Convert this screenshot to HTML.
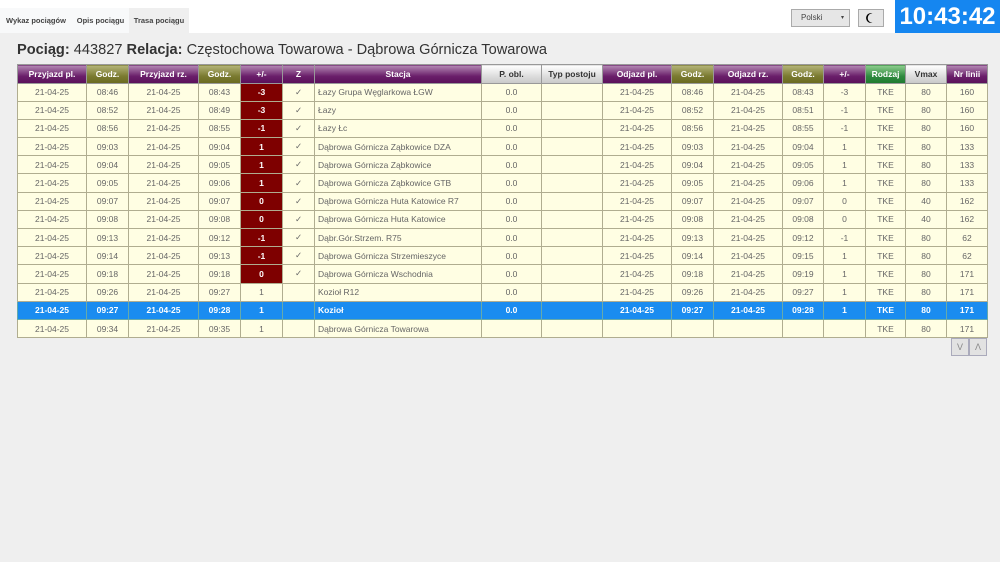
<!DOCTYPE html>
<html><head><meta charset="utf-8"><style>
*{box-sizing:border-box;margin:0;padding:0}
body{width:1000px;height:562px;background:#efefef;font-family:"Liberation Sans",sans-serif;overflow:hidden;position:relative}
.top{position:absolute;left:0;top:0;width:1000px;height:33px;background:#fff}
.tab{position:absolute;top:8px;height:25px;font-size:7.5px;font-weight:bold;color:#444;line-height:25px;text-align:center;background:#f8f9fa}
.sel{position:absolute;left:791px;top:9px;width:59px;height:18px;border:1px solid #aaa;background:#e6e6e6;font-size:8px;color:#444;line-height:16px;padding-left:9px}
.sel span{position:absolute;right:5px;top:0;font-size:6px}
.moon{position:absolute;left:858px;top:9px;width:26px;height:18px;border:1px solid #aaa;background:#e6e6e6}
.clock{position:absolute;left:895px;top:0;width:105px;height:33px;background:#1586f0;color:#fff;font-weight:bold;font-size:24px;line-height:33px;text-align:center}
h1{position:absolute;left:17px;top:42px;font-size:14.6px;font-weight:normal;color:#333;white-space:nowrap}
h1 b{font-weight:bold}
table{position:absolute;left:17px;top:64px;border-collapse:collapse;table-layout:fixed;width:970px;border:1px solid #8a9ab8}
td,th{height:18.2px;font-size:8.5px;text-align:center;border:1px solid #b0ad90;white-space:nowrap;overflow:hidden}
th{height:18.5px;color:#fff;font-weight:bold;border-color:#999}
th.p{background:linear-gradient(#b58ab5,#6a1e6a 60%,#5a105a)}
th.o{background:linear-gradient(#b5b57a,#7a7a30 60%,#6a6a20)}
th.g{background:linear-gradient(#fff,#ddd 60%,#c8c8c8);color:#333}
th.gr{background:linear-gradient(#8fcf8f,#2f8a3f 60%,#1f7a2f)}
td{background:#fffee3;color:#666}
td.s{text-align:left;padding-left:3px}
td.d{background:#7e0000;color:#fff;font-weight:bold}
tr.hl td{background:#1a8cf0;color:#fff;font-weight:bold;border-color:#6aa}
.btn{position:absolute;top:338px;width:18px;height:18px;border:1px solid #aab;background:#e2e2e2;color:#888;font-size:9px;text-align:center;line-height:16px}
</style></head><body>
<div class="top"></div>
<div class="tab" style="left:0;width:72px">Wykaz pociągów</div>
<div class="tab" style="left:72px;width:57px">Opis pociągu</div>
<div class="tab" style="left:129px;width:60px;background:#efefef">Trasa pociągu</div>
<div class="sel">Polski<span>▾</span></div>
<div class="moon"><svg width="24" height="16" viewBox="0 0 24 16"><path d="M13.5 3.2a5 5 0 1 0 0 9.6a4.2 4.2 0 0 1 0-9.6z" fill="#000"/></svg></div>
<div class="clock">10:43:42</div>
<h1><b>Pociąg:</b> 443827 <b>Relacja:</b> Częstochowa Towarowa - Dąbrowa Górnicza Towarowa</h1>
<table>
<colgroup><col style="width:69px"><col style="width:42px"><col style="width:70px"><col style="width:42px"><col style="width:42px"><col style="width:32px"><col style="width:167px"><col style="width:60px"><col style="width:61px"><col style="width:69px"><col style="width:42px"><col style="width:69px"><col style="width:41px"><col style="width:42px"><col style="width:40px"><col style="width:41px"><col style="width:41px"></colgroup>
<tr><th class="p">Przyjazd pl.</th><th class="o">Godz.</th><th class="p">Przyjazd rz.</th><th class="o">Godz.</th><th class="p">+/-</th><th class="p">Z</th><th class="p">Stacja</th><th class="g">P. obl.</th><th class="g">Typ postoju</th><th class="p">Odjazd pl.</th><th class="o">Godz.</th><th class="p">Odjazd rz.</th><th class="o">Godz.</th><th class="p">+/-</th><th class="gr">Rodzaj</th><th class="g">Vmax</th><th class="p">Nr linii</th></tr>
<tr><td>21-04-25</td><td>08:46</td><td>21-04-25</td><td>08:43</td><td class="d">-3</td><td>✓</td><td class="s">Łazy Grupa Węglarkowa ŁGW</td><td>0.0</td><td></td><td>21-04-25</td><td>08:46</td><td>21-04-25</td><td>08:43</td><td>-3</td><td>TKE</td><td>80</td><td>160</td></tr>
<tr><td>21-04-25</td><td>08:52</td><td>21-04-25</td><td>08:49</td><td class="d">-3</td><td>✓</td><td class="s">Łazy</td><td>0.0</td><td></td><td>21-04-25</td><td>08:52</td><td>21-04-25</td><td>08:51</td><td>-1</td><td>TKE</td><td>80</td><td>160</td></tr>
<tr><td>21-04-25</td><td>08:56</td><td>21-04-25</td><td>08:55</td><td class="d">-1</td><td>✓</td><td class="s">Łazy Łc</td><td>0.0</td><td></td><td>21-04-25</td><td>08:56</td><td>21-04-25</td><td>08:55</td><td>-1</td><td>TKE</td><td>80</td><td>160</td></tr>
<tr><td>21-04-25</td><td>09:03</td><td>21-04-25</td><td>09:04</td><td class="d">1</td><td>✓</td><td class="s">Dąbrowa Górnicza Ząbkowice DZA</td><td>0.0</td><td></td><td>21-04-25</td><td>09:03</td><td>21-04-25</td><td>09:04</td><td>1</td><td>TKE</td><td>80</td><td>133</td></tr>
<tr><td>21-04-25</td><td>09:04</td><td>21-04-25</td><td>09:05</td><td class="d">1</td><td>✓</td><td class="s">Dąbrowa Górnicza Ząbkowice</td><td>0.0</td><td></td><td>21-04-25</td><td>09:04</td><td>21-04-25</td><td>09:05</td><td>1</td><td>TKE</td><td>80</td><td>133</td></tr>
<tr><td>21-04-25</td><td>09:05</td><td>21-04-25</td><td>09:06</td><td class="d">1</td><td>✓</td><td class="s">Dąbrowa Górnicza Ząbkowice GTB</td><td>0.0</td><td></td><td>21-04-25</td><td>09:05</td><td>21-04-25</td><td>09:06</td><td>1</td><td>TKE</td><td>80</td><td>133</td></tr>
<tr><td>21-04-25</td><td>09:07</td><td>21-04-25</td><td>09:07</td><td class="d">0</td><td>✓</td><td class="s">Dąbrowa Górnicza Huta Katowice R7</td><td>0.0</td><td></td><td>21-04-25</td><td>09:07</td><td>21-04-25</td><td>09:07</td><td>0</td><td>TKE</td><td>40</td><td>162</td></tr>
<tr><td>21-04-25</td><td>09:08</td><td>21-04-25</td><td>09:08</td><td class="d">0</td><td>✓</td><td class="s">Dąbrowa Górnicza Huta Katowice</td><td>0.0</td><td></td><td>21-04-25</td><td>09:08</td><td>21-04-25</td><td>09:08</td><td>0</td><td>TKE</td><td>40</td><td>162</td></tr>
<tr><td>21-04-25</td><td>09:13</td><td>21-04-25</td><td>09:12</td><td class="d">-1</td><td>✓</td><td class="s">Dąbr.Gór.Strzem. R75</td><td>0.0</td><td></td><td>21-04-25</td><td>09:13</td><td>21-04-25</td><td>09:12</td><td>-1</td><td>TKE</td><td>80</td><td>62</td></tr>
<tr><td>21-04-25</td><td>09:14</td><td>21-04-25</td><td>09:13</td><td class="d">-1</td><td>✓</td><td class="s">Dąbrowa Górnicza Strzemieszyce</td><td>0.0</td><td></td><td>21-04-25</td><td>09:14</td><td>21-04-25</td><td>09:15</td><td>1</td><td>TKE</td><td>80</td><td>62</td></tr>
<tr><td>21-04-25</td><td>09:18</td><td>21-04-25</td><td>09:18</td><td class="d">0</td><td>✓</td><td class="s">Dąbrowa Górnicza Wschodnia</td><td>0.0</td><td></td><td>21-04-25</td><td>09:18</td><td>21-04-25</td><td>09:19</td><td>1</td><td>TKE</td><td>80</td><td>171</td></tr>
<tr><td>21-04-25</td><td>09:26</td><td>21-04-25</td><td>09:27</td><td>1</td><td></td><td class="s">Kozioł R12</td><td>0.0</td><td></td><td>21-04-25</td><td>09:26</td><td>21-04-25</td><td>09:27</td><td>1</td><td>TKE</td><td>80</td><td>171</td></tr>
<tr class="hl"><td>21-04-25</td><td>09:27</td><td>21-04-25</td><td>09:28</td><td>1</td><td></td><td class="s">Kozioł</td><td>0.0</td><td></td><td>21-04-25</td><td>09:27</td><td>21-04-25</td><td>09:28</td><td>1</td><td>TKE</td><td>80</td><td>171</td></tr>
<tr><td>21-04-25</td><td>09:34</td><td>21-04-25</td><td>09:35</td><td>1</td><td></td><td class="s">Dąbrowa Górnicza Towarowa</td><td></td><td></td><td></td><td></td><td></td><td></td><td></td><td>TKE</td><td>80</td><td>171</td></tr>
</table>
<div class="btn" style="left:951px">V</div>
<div class="btn" style="left:969px">Λ</div>
</body></html>
